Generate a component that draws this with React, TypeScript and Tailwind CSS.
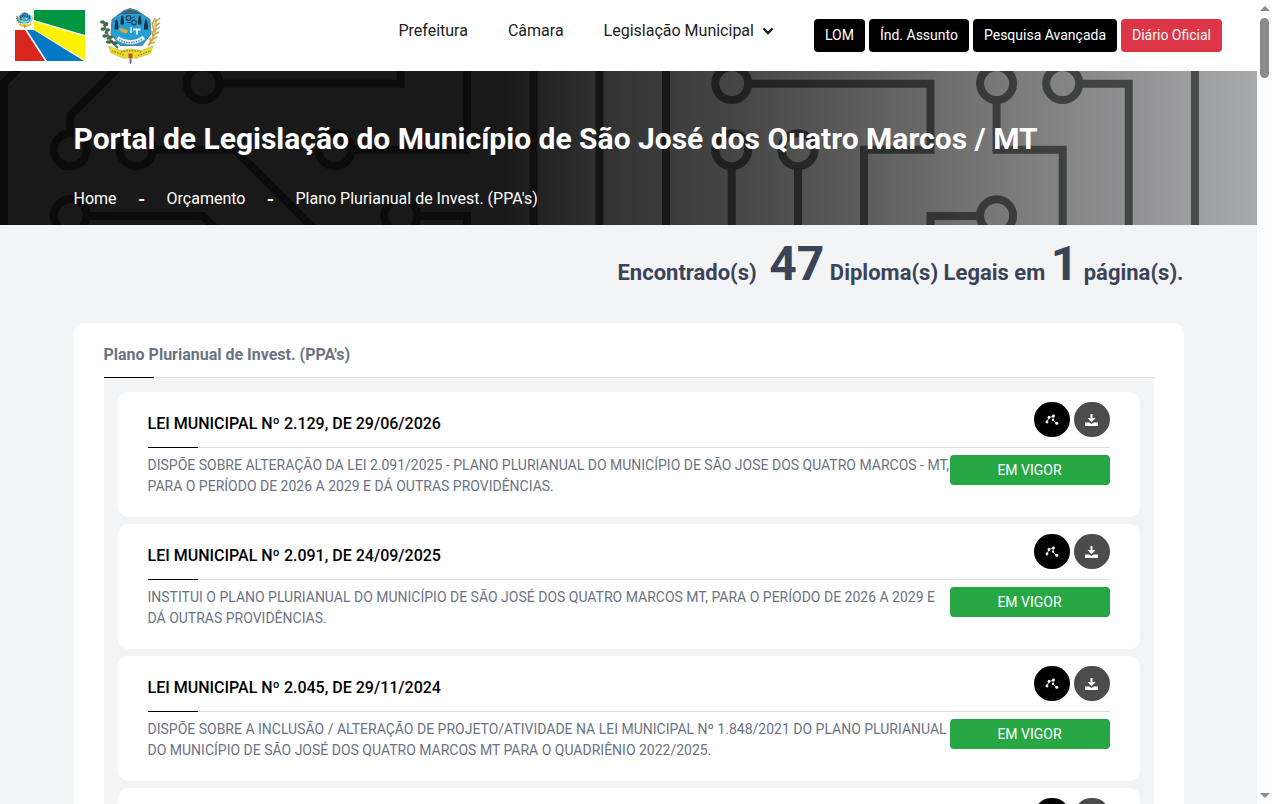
import React from "react";

const laws = [
  {
    title: "LEI MUNICIPAL Nº 2.129, DE 29/06/2026",
    text: "DISPÕE SOBRE ALTERAÇÃO DA LEI 2.091/2025 - PLANO PLURIANUAL DO MUNICÍPIO DE SÃO JOSE DOS QUATRO MARCOS - MT, PARA O PERÍODO DE 2026 A 2029 E DÁ OUTRAS PROVIDÊNCIAS.",
  },
  {
    title: "LEI MUNICIPAL Nº 2.091, DE 24/09/2025",
    text: "INSTITUI O PLANO PLURIANUAL DO MUNICÍPIO DE SÃO JOSÉ DOS QUATRO MARCOS MT, PARA O PERÍODO DE 2026 A 2029 E DÁ OUTRAS PROVIDÊNCIAS.",
  },
  {
    title: "LEI MUNICIPAL Nº 2.045, DE 29/11/2024",
    text: "DISPÕE SOBRE A INCLUSÃO / ALTERAÇÃO DE PROJETO/ATIVIDADE NA LEI MUNICIPAL Nº 1.848/2021 DO PLANO PLURIANUAL DO MUNICÍPIO DE SÃO JOSÉ DOS QUATRO MARCOS MT PARA O QUADRIÊNIO 2022/2025.",
  },
  { title: "", text: "" },
];

function CrestArt() {
  return (
    <>
      <path d="M4 15Q7 30 13 36L18 41" fill="none" stroke="#4f7f5e" strokeWidth="2" />
      <g fill="#2e7048">
        <ellipse cx="2.500" cy="15" rx="2.500" ry="1.700" />
        <ellipse cx="6.500" cy="17" rx="2" ry="2" />
        <ellipse cx="3" cy="22" rx="2.500" ry="1.800" />
        <ellipse cx="8" cy="23" rx="2" ry="1.800" />
        <ellipse cx="5" cy="29" rx="2.700" ry="1.700" />
        <ellipse cx="11" cy="30" rx="2.300" ry="1.800" />
        <ellipse cx="9" cy="35" rx="3" ry="1.700" />
        <ellipse cx="15" cy="36" rx="3" ry="1.700" />
      </g>
      <g fill="#a5303a">
        <circle cx="4.500" cy="18.500" r="1.300" />
        <circle cx="6" cy="25.500" r="1.300" />
        <circle cx="8" cy="31.500" r="1.300" />
        <circle cx="12" cy="34.500" r="1.300" />
      </g>
      <path d="M56 12Q56 30 48 39" fill="none" stroke="#d9c66a" strokeWidth="2.500" />
      <path
        d="M55 11l-3 7M55 15l5-4M55 19l5-3M54 24l6-4M53 28l6-3M51 33l6-3M48 37l7-2M52 15l2 10M52 24l1 6M50 31l1 6"
        fill="none"
        stroke="#c0a850"
        strokeWidth="1.500"
      />
      <path d="M24 3.500L30 1.500L37 3.500L50 12.500L51 27L42 38.500H20L11 27L12 12.500Z" fill="#229fd3" stroke="#48677c" strokeWidth=".8" />
      <path d="M23 5L30 2.500L38 5L41 7H20Z" fill="#3d6076" />
      <g fill="#1c3048">
        <path d="M14.500 22.500v-3l1-6 1-1.500 1 1.500 1 6v3z" />
        <path d="M20.500 17.500v-3l.7-5 1-1.500 1 1.500.8 5v3z" />
        <path d="M44 22.500v-3l1-6 1-1.500 1 1.500 1 6v3z" />
        <path d="M38 17.500v-3l.7-5 1-1.500 1 1.500.8 5v3z" />
      </g>
      <g fill="none" stroke="#26445a" strokeWidth="1.200">
        <circle cx="28.500" cy="11" r="2.300" />
        <circle cx="34" cy="15.500" r="2.300" />
        <path d="M27 15.500h4M31 11l4-1" />
      </g>
      <path d="M18 21.500h5l5 2-1 3-5-1z" fill="#d7ac40" />
      <path d="M30.500 20h1.500v6h-2z" fill="#dce9ee" />
      <path d="M33 21.500h7.500v2h-2.500v4h-2v-4H33z" fill="#eef4f5" />
      <path d="M17.500 31Q31 39.500 44 30.500" fill="none" stroke="#e9edf0" strokeWidth="4" />
      <path d="M19 32.500Q31 39 43 31.800" fill="none" stroke="#71889a" strokeWidth="1.400" strokeDasharray="1.500 1" />
      <path d="M8.500 39l12 4.500q10.500-3 21 0L53 39l-2.500 7-14 5.500q-6-2.500-12 0L11 46z" fill="#eadb25" stroke="#b5a92f" strokeWidth=".5" />
      <path d="M21 45q10-2.500 20 0M12 44l12 4M38 48.500l12-4.500" fill="none" stroke="#8e841f" strokeWidth="1.300" strokeDasharray="1.500 1.200" />
      <path d="M28.500 46.500h4v5h-4z" fill="#bd542e" />
      <path d="M29.500 51.500h2v4l-1 2-1-2z" fill="#6b7280" />
    </>
  );
}

function Flag() {
  return (
    <svg viewBox="0 0 70 51" className="h-[51px] w-[70px]" role="img" aria-label="Bandeira">
      <rect width="70" height="51" fill="#fff" />
      <path d="M19 0h51v25L19 10z" fill="#009640" />
      <path d="M19 11.500L70 26.500v23.500L19 19.500z" fill="#fff200" />
      <path d="M12 20h7L69 51H32z" fill="#0079c4" />
      <path d="M0 20h10L30 51H0z" fill="#d9261c" />
      <g transform="translate(1 2) scale(.29)">
        <CrestArt />
      </g>
    </svg>
  );
}

function Circuit() {
  const rings = [
    [203, 12.6], [70.3, 78.7], [136.3, 78.7], [335, 78.7], [70.3, 144.7], [401, 144.7],
    [731.7, 12.6], [731.7, 78.7], [798, 78.7], [996.6, 12.6], [1062.7, 12.6], [996.6, 144.7],
  ];
  return (
    <svg
      viewBox="0 0 1257 154"
      preserveAspectRatio="xMidYMid slice"
      className="absolute inset-0 h-full w-full"
      aria-hidden="true"
    >
      <defs>
        <linearGradient id="trace" gradientUnits="userSpaceOnUse" x1="0" y1="0" x2="1257" y2="0">
          <stop offset="0" stopColor="#0b0b0b" />
          <stop offset=".4" stopColor="#0c0c0c" />
          <stop offset=".53" stopColor="#191919" />
          <stop offset=".69" stopColor="#2c2d2d" />
          <stop offset=".8" stopColor="#3a3b3b" />
          <stop offset="1" stopColor="#4f5150" />
        </linearGradient>
      </defs>
      <g fill="none" stroke="url(#trace)" strokeWidth="8">
        {rings.map(([x, y]) => (
          <circle key={`${x}-${y}`} cx={x} cy={y} r="16.5" />
        ))}
        <path d="M4 160V12L24 -8M70.300 62V44.400L122 -7M219.500 12.700H401V-6M152.800 78.700H235L318 162M351.500 78.700H467V-6M86.800 145H203L220 162M417.500 145H467V160" />
        <path d="M748 12.700H930.500V78.700H864V160M731.700 95V160M798 95V160M996.600 29V78.700H1062.700V160M1079 12.700H1128.700V160M980 145H930.500V160" />
      </g>
      <g fill="url(#trace)">
        <rect x="529.5" width="8" height="154" />
        <rect x="595.5" width="8" height="154" />
        <rect x="662" width="8" height="154" />
        <rect x="1191" width="8" height="154" />
      </g>
    </svg>
  );
}

function NodesIcon() {
  return (
    <svg viewBox="0 0 14 12" className="h-3 w-[14px]" aria-hidden="true">
      <path d="M2 8L4 3.500L8.500 2M8 2L8 6L11.500 9.500" fill="none" stroke="#fff" strokeWidth=".8" />
      <g fill="#fff">
        <circle cx="2" cy="8" r="1.400" />
        <circle cx="4" cy="3.500" r="1.400" />
        <circle cx="8.500" cy="2" r="1.400" />
        <circle cx="8" cy="5.800" r="1.100" />
        <circle cx="11.800" cy="9.300" r="1.500" />
      </g>
    </svg>
  );
}

function DownloadIcon() {
  return (
    <svg viewBox="0 0 13 12" className="h-3 w-[13px]" aria-hidden="true">
      <path d="M5.500 0h2v4H10.500L6.500 8.200L2.500 4H5.500z" fill="#fff" />
      <path d="M0 8.500h4.300L6.500 10l2.200-1.500H13V12H0z" fill="#fff" />
    </svg>
  );
}

function Divider() {
  return (
    <div className="h-px bg-[#dddddd]">
      <div className="h-px w-[50px] bg-black" />
    </div>
  );
}

function LawCard({ title, text }: { title: string; text: string }) {
  return (
    <article className="min-h-[125px] rounded-[10px] bg-white px-[30px] pt-[10px]">
      <div className="flex h-[45px] justify-between">
        <h3 className="pt-[10px] text-base leading-6 font-medium text-black">{title}</h3>
        <div className="flex gap-1">
          <button aria-label="Relações" className="flex h-[35px] w-9 items-center justify-center rounded-full bg-black">
            <NodesIcon />
          </button>
          <button aria-label="Baixar" className="flex h-[35px] w-9 items-center justify-center rounded-full bg-[#4c4c4c]">
            <DownloadIcon />
          </button>
        </div>
      </div>
      <Divider />
      <div className="flex items-start pt-[7px]">
        <p className="flex-1 text-sm leading-[21px] text-[#6b7385]">{text}</p>
        {text && (
          <button className="h-[30px] w-40 rounded-[4px] bg-[#28a745] text-sm text-white">EM VIGOR</button>
        )}
      </div>
    </article>
  );
}

export default function App() {
  return (
    <div className="flex h-screen overflow-hidden bg-[#f3f4f6] font-['Roboto',sans-serif]">
      <div className="min-w-0 flex-1 overflow-hidden">
        <header className="flex h-[71px] items-center bg-white pr-[35px] pl-[15px]">
          <a href="#inicio" className="flex items-center gap-[15px]">
            <Flag />
            <svg viewBox="0 0 61 58" className="h-[58px] w-[61px]" role="img" aria-label="Brasão">
              <CrestArt />
            </svg>
          </a>
          <nav className="mb-[10px] ml-auto flex items-center gap-10 text-base text-[#1c1c1c]">
            <a href="#prefeitura">Prefeitura</a>
            <a href="#camara">Câmara</a>
            <a href="#legislacao" className="flex items-center gap-2">
              Legislação Municipal
              <svg viewBox="0 0 12 8" className="h-2 w-3" aria-hidden="true">
                <path d="M1.500 1.500L6 6l4.500-4.500" fill="none" stroke="currentColor" strokeWidth="2.400" />
              </svg>
            </a>
          </nav>
          <div className="ml-10 flex gap-1 text-sm text-white">
            <button className="h-[33px] rounded-[4px] bg-black px-[11px] pb-[2px]">LOM</button>
            <button className="h-[33px] rounded-[4px] bg-black px-[11px] pb-[2px]">Índ. Assunto</button>
            <button className="h-[33px] rounded-[4px] bg-black px-[11px] pb-[2px]">Pesquisa Avançada</button>
            <button className="h-[33px] rounded-[4px] bg-[#dc3545] px-[11px] pb-[2px]">Diário Oficial</button>
          </div>
        </header>

        <section className="relative h-[154px] bg-[linear-gradient(90deg,#191919_0%,#191919_40%,#323232_48%,#474747_59%,#5b5b5b_68%,#777777_79%,#919193_90%,#a9aaac_100%)]">
          <Circuit />
          <div className="relative mx-auto max-w-[1140px] px-[15px] pt-12 text-white">
            <h1 className="text-[30px] leading-10 font-bold">
              Portal de Legislação do Município de São José dos Quatro Marcos / MT
            </h1>
            <nav className="flex pt-7 text-base leading-6">
              <a href="#home">Home</a>
              <span className="w-[50px] text-center text-xl leading-6 font-medium">-</span>
              <a href="#orcamento">Orçamento</a>
              <span className="w-[50px] text-center text-xl leading-6 font-medium">-</span>
              <span>Plano Plurianual de Invest. (PPA's)</span>
            </nav>
          </div>
        </section>

        <main className="mx-auto max-w-[1140px] px-[15px]">
          <h2 className="h-[98px] pt-[3px] text-right text-[22px] leading-[72px] font-bold text-[#3b4358]">
            Encontrado(s) <span className="ml-[7px] text-5xl leading-[72px]">47</span> Diploma(s) Legais em{" "}
            <span className="text-5xl leading-[72px]">1</span> página(s).
          </h2>
          <section className="rounded-[10px] bg-white px-[30px] pt-5">
            <h2 className="pb-[10px] text-base leading-6 font-bold text-[#6b7385]">Plano Plurianual de Invest. (PPA's)</h2>
            <Divider />
            <div className="flex flex-col gap-[7px] bg-[#f3f4f6] p-[14px]">
              {laws.map((law, i) => (
                <LawCard key={i} {...law} />
              ))}
            </div>
          </section>
        </main>
      </div>

      <div className="flex w-[15px] shrink-0 flex-col items-center justify-between bg-[#fcfcfc] py-[6px]" aria-hidden="true">
        <div className="flex flex-col items-center gap-[7px]">
          <svg viewBox="0 0 10 5" className="h-[5px] w-[10px]">
            <path d="M0 5L5 0L10 5z" fill="#8b8b8b" />
          </svg>
          <div className="h-[60px] w-[9px] rounded-full bg-[#8b8b8b]" />
        </div>
        <svg viewBox="0 0 10 5" className="h-[5px] w-[10px]">
          <path d="M0 0L5 5L10 0z" fill="#8b8b8b" />
        </svg>
      </div>
    </div>
  );
}
